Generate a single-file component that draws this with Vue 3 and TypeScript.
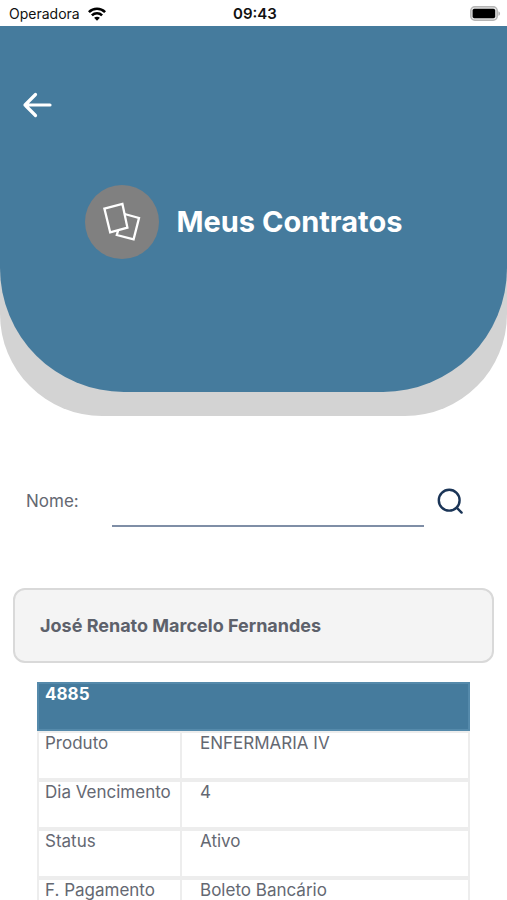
<script setup lang="ts">
import { ref } from 'vue'

interface Field {
  label: string
  value: string
}

interface Contract {
  id: string
  fields: Field[]
}

const query = ref('')
const holder = 'José Renato Marcelo Fernandes'
const contract: Contract = {
  id: '4885',
  fields: [
    { label: 'Produto', value: 'ENFERMARIA IV' },
    { label: 'Dia Vencimento', value: '4' },
    { label: 'Status', value: 'Ativo' },
    { label: 'F. Pagamento', value: 'Boleto Bancário' },
  ],
}
</script>

<template>
  <div class="screen">
    <div class="status-bar">
      <div class="carrier">
        <span>Operadora</span>
        <svg class="wifi" viewBox="0 0 18 14" aria-hidden="true">
          <g fill="none" stroke="#000" stroke-width="2.6">
            <path d="M0.9 5.1C5.4 0.6 12.6 0.6 17.1 5.1" />
            <path d="M3.9 8.4C6.8 5.6 11.2 5.6 14.1 8.4" />
          </g>
          <path d="M9 13.7L6.1 10.8C7.7 9.3 10.3 9.3 11.9 10.8Z" />
        </svg>
      </div>
      <time class="clock">09:43</time>
      <div class="power">
        <svg class="battery" viewBox="0 0 31 15" aria-hidden="true">
          <rect x="0.8" y="0.8" width="26.4" height="13.4" rx="4" fill="#e6e6e6" stroke="#b5b5b5" stroke-width="1.5" />
          <rect x="2.6" y="2.8" width="22.6" height="9.4" rx="1.8" />
          <path d="M28.4 5.2C30.6 6 30.6 9 28.4 9.8Z" fill="#b5b5b5" />
        </svg>
      </div>
    </div>

    <header class="hero">
      <div class="hero-panel">
        <button class="back" type="button" aria-label="Voltar">
          <svg viewBox="0 0 30 26" aria-hidden="true">
            <path d="M13.5 2.5L3 13L13.5 23.5M3 13H28" fill="none" stroke="#fff" stroke-width="3.2" stroke-linecap="round" stroke-linejoin="round" />
          </svg>
        </button>
        <div class="heading">
          <span class="badge">
            <svg viewBox="0 0 40 40" aria-hidden="true">
              <g fill="none" stroke="#fff" stroke-width="2.3">
                <path d="M2.4 6.6L20.4 1.8L25.4 25.6L8.2 30.4Z" />
                <path d="M22.6 12L37 16L31.6 37.4L14.8 33L16.2 28.2" />
              </g>
            </svg>
          </span>
          <h1>Meus Contratos</h1>
        </div>
      </div>
    </header>

    <main>
      <form class="search" @submit.prevent>
        <label for="name">Nome:</label>
        <input id="name" v-model="query" type="text" autocomplete="off" />
        <button type="submit" aria-label="Buscar">
          <svg viewBox="0 0 26 26" aria-hidden="true">
            <g fill="none" stroke="#1b3557" stroke-width="2.4" stroke-linecap="round">
              <circle cx="12.2" cy="12.2" r="10.4" />
              <path d="M19.7 19.7L24.6 24.6" />
            </g>
          </svg>
        </button>
      </form>

      <h2 class="holder">{{ holder }}</h2>

      <table class="contract">
        <colgroup>
          <col class="label-col" />
          <col />
        </colgroup>
        <thead>
          <tr>
            <th colspan="2" scope="colgroup">{{ contract.id }}</th>
          </tr>
        </thead>
        <tbody>
          <tr v-for="field in contract.fields" :key="field.label">
            <th scope="row">{{ field.label }}</th>
            <td>{{ field.value }}</td>
          </tr>
        </tbody>
      </table>
    </main>
  </div>
</template>

<style>
body {
  background: #fff;
}
</style>

<style scoped>
.screen {
  height: 100vh;
  overflow-y: auto;
  scrollbar-width: none;
  background: #fff;
  color: #646872;
  font-family: Inter, "Liberation Sans", sans-serif;
  font-size: 17px;
  line-height: 20px;
}

.status-bar {
  display: grid;
  grid-template-columns: 1fr auto 1fr;
  align-items: center;
  height: 26px;
  padding: 1px 6px 0 9px;
  box-sizing: border-box;
  color: #111;
  font-size: 14px;
}

.carrier {
  display: flex;
  align-items: center;
  gap: 8px;
}

.wifi {
  width: 18px;
  height: 14px;
}

.clock {
  font-size: 15px;
  font-weight: 600;
}

.power {
  display: flex;
  justify-content: flex-end;
}

.battery {
  width: 31px;
  height: 15px;
}

.hero {
  padding-bottom: 24px;
  border-radius: 0 0 102px 102px;
  background: #d3d3d3;
}

.hero-panel {
  padding: 64px 22px 133px;
  border-radius: 0 0 124px 124px;
  background: #457b9d;
}

button {
  display: block;
  padding: 0;
  border: 0;
  background: none;
  cursor: pointer;
}

.back svg {
  display: block;
  width: 30px;
  height: 30px;
}

.heading {
  display: flex;
  align-items: center;
  justify-content: center;
  gap: 18px;
  margin-top: 65px;
  margin-right: 20px;
}

.badge {
  display: flex;
  align-items: center;
  justify-content: center;
  width: 74px;
  height: 74px;
  border-radius: 50%;
  background: #808080;
}

.badge svg {
  width: 40px;
  height: 40px;
}

h1 {
  margin: 0;
  color: #fff;
  font-size: 29px;
  line-height: 36px;
  font-weight: 700;
}

.search {
  display: grid;
  grid-template-columns: 73px 1fr auto;
  align-items: center;
  gap: 13px;
  margin: 59px 44px 0 26px;
}

.search input {
  min-width: 0;
  height: 52px;
  padding: 0;
  box-sizing: border-box;
  border: 0;
  border-bottom: 2px solid #7f8ea6;
  outline: 0;
  background: none;
  color: inherit;
  font: inherit;
}

.search svg {
  display: block;
  width: 26px;
  height: 26px;
}

.holder {
  margin: 61px 13px 0;
  padding: 26px 25px 25px;
  border: 2px solid #d9d9d9;
  border-radius: 12px;
  background: #f4f4f4;
  color: #5d616b;
  font-size: 18px;
  font-weight: 700;
}

.contract {
  width: calc(100% - 74px);
  margin: 19px 37px 0;
  border-collapse: separate;
  border-spacing: 0;
  table-layout: fixed;
}

.label-col {
  width: 33.5%;
}

th,
td {
  height: 49px;
  padding: 0 0 0 6px;
  box-sizing: border-box;
  border: 2px solid #ededed;
  text-align: left;
  vertical-align: top;
  font-weight: 400;
}

thead th {
  border-color: #558aab;
  background: #457b9d;
  color: #fff;
  font-weight: 700;
}

tbody td {
  padding-left: 18px;
  border-left: 0;
}
</style>
